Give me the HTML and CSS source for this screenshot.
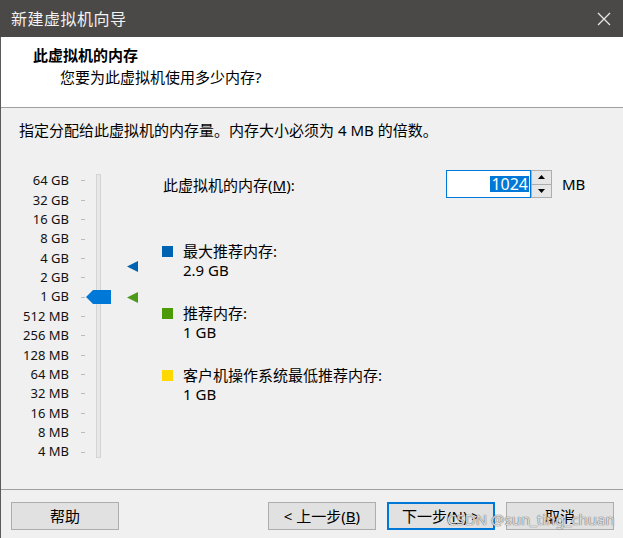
FILE: index.html
```html
<!DOCTYPE html>
<html lang="zh-CN">
<head>
<meta charset="utf-8">
<title>新建虚拟机向导</title>
<link rel="stylesheet" href="styles.css">
</head>
<body>
<div class="window">
  <div class="titlebar">
    <span class="title">新建虚拟机向导</span>
    <svg class="close" width="14" height="14" viewBox="0 0 14 14"><path d="M1 1 L13 13 M13 1 L1 13" stroke="#e6e6e6" stroke-width="1.3" fill="none"/></svg>
  </div>
  <div class="frame">
    <div class="header">
      <div class="h-title">此虚拟机的内存</div>
      <div class="h-sub">您要为此虚拟机使用多少内存?</div>
    </div>
    <div class="body">
      <p class="intro">指定分配给此虚拟机的内存量。内存大小必须为 4 MB 的倍数。</p>
      <div class="main">
        <div class="scale">
          <ul class="labels">
            <li>64 GB</li><li>32 GB</li><li>16 GB</li><li>8 GB</li><li>4 GB</li><li>2 GB</li><li>1 GB</li>
            <li>512 MB</li><li>256 MB</li><li>128 MB</li><li>64 MB</li><li>32 MB</li><li>16 MB</li><li>8 MB</li><li>4 MB</li>
          </ul>
          <ul class="ticks">
            <li></li><li></li><li></li><li></li><li></li><li></li><li></li><li></li><li></li><li></li><li></li><li></li><li></li><li></li><li></li>
          </ul>
          <div class="track"></div>
          <svg class="thumb" width="25" height="14" viewBox="0 0 25 14"><path d="M0 7 L7 0 H25 V14 H7 Z" fill="#0078d7"/></svg>
          <svg class="marker marker-max" width="12" height="11" viewBox="0 0 12 11"><path d="M0 5.5 L11 0 V11 Z" fill="#0063b1"/></svg>
          <svg class="marker marker-rec" width="12" height="11" viewBox="0 0 12 11"><path d="M0 5.5 L11 0 V11 Z" fill="#4c9a1c"/></svg>
        </div>
        <div class="settings">
          <div class="mem-row">
            <label class="mem-label">此虚拟机的内存(<u>M</u>):</label>
            <div class="field"><span class="sel">1024</span></div>
            <div class="spin">
              <div class="spin-btn"><svg width="7" height="4" viewBox="0 0 7 4"><path d="M0 4 L3.5 0 L7 4 Z" fill="#000"/></svg></div>
              <div class="spin-btn"><svg width="7" height="4" viewBox="0 0 7 4"><path d="M0 0 L3.5 4 L7 0 Z" fill="#000"/></svg></div>
            </div>
            <span class="unit">MB</span>
          </div>
          <ul class="legend">
            <li class="item"><span class="swatch sw-max"></span><div><div>最大推荐内存:</div><div>2.9 GB</div></div></li>
            <li class="item"><span class="swatch sw-rec"></span><div><div>推荐内存:</div><div>1 GB</div></div></li>
            <li class="item"><span class="swatch sw-min"></span><div><div>客户机操作系统最低推荐内存:</div><div>1 GB</div></div></li>
          </ul>
        </div>
      </div>
    </div>
    <div class="footer">
      <button class="btn">帮助</button>
      <div class="spacer"></div>
      <button class="btn">&lt; 上一步(<u>B</u>)</button>
      <button class="btn btn-default">下一步(<u>N</u>) &gt;</button>
      <button class="btn">取消</button>
      <span class="watermark">CSDN @sun_ting_chuan</span>
    </div>
  </div>
</div>
</body>
</html>
```

FILE: styles.css
```css
* { box-sizing: border-box; }
html, body { margin: 0; padding: 0; }
body {
  width: 623px;
  height: 538px;
  overflow: hidden;
  font-family: "Noto Sans", "Noto Sans CJK SC", sans-serif;
  color: #000;
  background: #f0f0f0;
}
ul { list-style: none; margin: 0; padding: 0; }
p { margin: 0; }

.window { width: 623px; height: 538px; display: flex; flex-direction: column; }

.titlebar {
  height: 37px;
  background: #4a4947;
  color: #f2f2f2;
  display: flex;
  align-items: center;
  padding: 0 12px 0 11px;
  flex: none;
}
.title { font-size: 16px; line-height: 20px; flex: 1; letter-spacing: 0.5px; }
.close { display: block; margin-top: 1px; }

.frame {
  flex: 1;
  border-left: 1px solid #5b5b5b;
  display: flex;
  flex-direction: column;
}

.header {
  height: 71px;
  background: #fff;
  border-bottom: 1px solid #a0a0a0;
  padding: 8px 0 0 32px;
  flex: none;
}
.h-title { font-size: 15px; line-height: 20px; font-weight: bold; }
.h-sub { font-size: 15px; line-height: 20px; margin-top: 2px; padding-left: 27px; }

.body {
  height: 381px;
  flex: none;
  background: #f0f0f0;
}
.intro { font-size: 15px; line-height: 20px; padding: 12px 0 0 18px; height: 32px; }

.main { display: flex; }

.scale {
  position: relative;
  width: 160px;
  height: 340px;
  display: flex;
  padding-top: 31.3px;
  flex: none;
}
.labels { width: 68px; text-align: right; font-size: 13px; line-height: 19.36px; color: #111; }
.labels li { height: 19.36px; white-space: nowrap; }
.ticks { width: 4px; margin-left: 12px; }
.ticks li { height: 19.36px; display: flex; align-items: center; }
.ticks li::before { content: ""; display: block; width: 4px; height: 1px; background: #bcbcbc; }
.track {
  width: 5px;
  height: 284px;
  margin-left: 11px;
  margin-top: 2.7px;
  background: #e7e7e7;
  border: 1px solid #d4d4d4;
}
.thumb { position: absolute; left: 85px; top: 150px; display: block; }
.marker { position: absolute; left: 126px; display: block; }
.marker-max { top: 121px; }
.marker-rec { top: 152px; }

.settings { flex: 1; padding-top: 30px; font-size: 15px; }
.mem-row { display: flex; align-items: center; height: 28px; }
.mem-label { width: 285px; padding-left: 2px; line-height: 20px; margin-top: 1px; }
.field {
  width: 85px;
  height: 28px;
  background: #fff;
  border: 1px solid #0078d7;
  display: flex;
  align-items: center;
  justify-content: flex-end;
  padding-right: 1px;
}
.sel {
  background: #0078d7;
  color: #fff;
  font-size: 16px;
  line-height: 16px;
  height: 16px;
  padding: 0 1px;
}
.spin { width: 21px; height: 28px; display: flex; flex-direction: column; }
.spin-btn {
  flex: 1;
  background: #e6e6e6;
  border: 1px solid #adadad;
  display: flex;
  align-items: center;
  justify-content: center;
}
.spin-btn + .spin-btn { border-top: none; }
.spin-btn svg { display: block; }
.unit { margin-left: 10px; line-height: 20px; }

.legend { margin-top: 43.5px; }
.item { display: flex; line-height: 19px; margin-bottom: 24px; }
.swatch { width: 11px; height: 11px; margin: 4px 10px 0 1px; flex: none; }
.sw-max { background: #0063b1; }
.sw-rec { background: #4c9a06; }
.sw-min { background: #ffd800; }

.footer {
  position: relative;
  flex: 1;
  border-top: 1px solid #a0a0a0;
  display: flex;
  align-items: flex-start;
  padding: 12px 9px 0 10px;
  gap: 11px;
}
.spacer { flex: 1; }
.btn {
  width: 108px;
  height: 28px;
  background: #e1e1e1;
  border: 1px solid #adadad;
  font-family: "Noto Sans", "Noto Sans CJK SC", sans-serif;
  font-size: 15px;
  line-height: 20px;
  color: #000;
  padding: 0;
  margin: 0;
}
.btn-default { border: 2px solid #0078d7; }
.watermark {
  position: absolute;
  left: 446px;
  top: 19px;
  font-size: 15px;
  line-height: 20px;
  color: rgba(255, 255, 255, 0.8);
  text-shadow: 0 0 1px #555, 0 0 1px #777;
  white-space: nowrap;
}
```
